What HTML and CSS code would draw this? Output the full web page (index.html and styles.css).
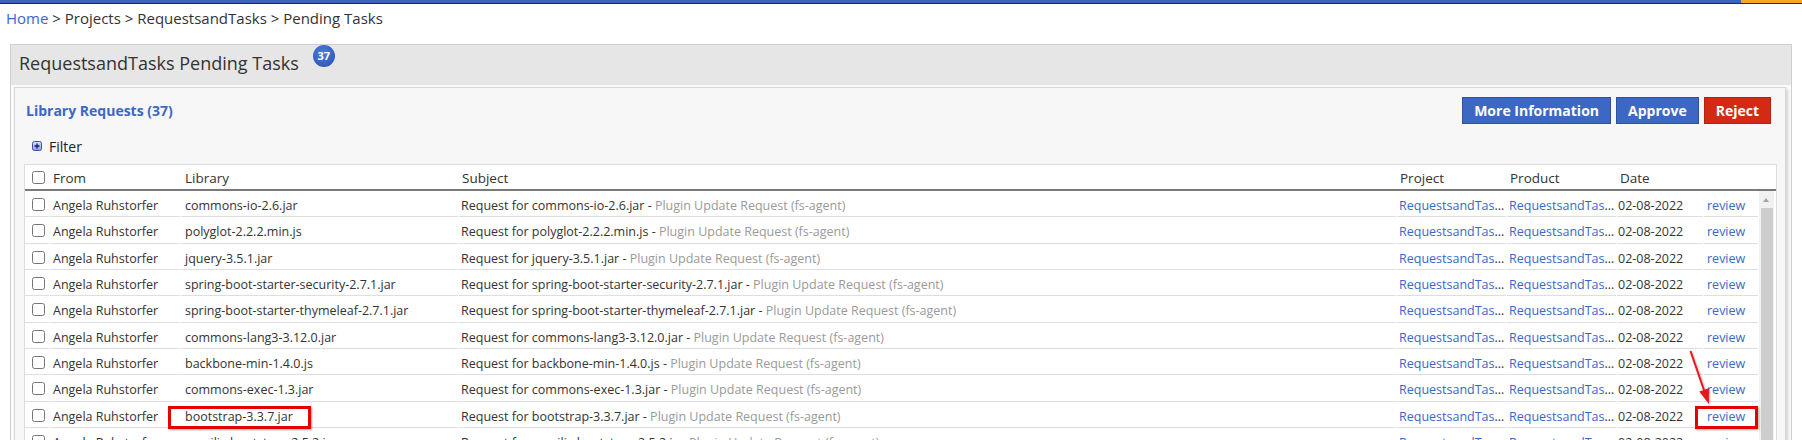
FILE: index.html
```html
<!DOCTYPE html>
<html>
<head>
<meta charset="utf-8">
<title>RequestsandTasks Pending Tasks</title>
<link rel="stylesheet" href="styles.css">
</head>
<body>
<div class="topbar"><div class="topbar-blue"></div><div class="topbar-orange"></div></div>
<nav class="crumbs"><a class="link">Home</a> &gt; Projects &gt; RequestsandTasks &gt; Pending Tasks</nav>
<section class="panel">
  <header class="panel-head">
    <h1 class="panel-title">RequestsandTasks Pending Tasks</h1>
    <span class="badge">37</span>
  </header>
  <div class="panel-body">
    <div class="card">
      <div class="toolbar">
        <span class="card-title">Library Requests (37)</span>
        <div class="btns">
          <button class="btn btn-blue">More Information</button>
          <button class="btn btn-blue">Approve</button>
          <button class="btn btn-red">Reject</button>
        </div>
      </div>
      <div class="filter">
        <svg class="filter-icon" width="10" height="10" viewBox="0 0 10 10"><defs><linearGradient id="fg" x1="0" y1="0" x2="0" y2="1"><stop offset="0" stop-color="#dfe2fa"/><stop offset="1" stop-color="#8f99e2"/></linearGradient></defs><rect x="0.5" y="0.5" width="9" height="9" rx="2" fill="url(#fg)" stroke="#3b4bb5"/><path d="M2.5 5h5M5 2.5v5" stroke="#0f1870" stroke-width="1.3"/></svg>
        <span>Filter</span>
      </div>
      <div class="grid">
        <div class="grid-head">
          <table class="tbl">
            <colgroup><col class="c-cb"><col class="c-from"><col class="c-lib"><col class="c-subj"><col class="c-proj"><col class="c-prod"><col class="c-date"><col class="c-rev"><col class="c-sb"></colgroup>
            <tr class="hrow"><th class="cb"><input type="checkbox"></th><th>From</th><th class="lib">Library</th><th>Subject</th><th>Project</th><th>Product</th><th>Date</th><th></th><th></th></tr>
          </table>
        </div>
        <div class="grid-body">
          <table class="tbl tbl-body">
            <colgroup><col class="c-cb"><col class="c-from"><col class="c-lib"><col class="c-subj"><col class="c-proj"><col class="c-prod"><col class="c-date"><col class="c-rev"></colgroup>
            <tr><td class="cb"><input type="checkbox"></td><td>Angela Ruhstorfer</td><td class="lib">commons-io-2.6.jar</td><td class="subj">Request for commons-io-2.6.jar - <span class="muted">Plugin Update Request (fs-agent)</span></td><td class="trunc"><a class="link">RequestsandTasks</a></td><td class="trunc"><a class="link">RequestsandTasks</a></td><td class="date">02-08-2022</td><td class="rev"><a class="link">review</a></td></tr>
            <tr><td class="cb"><input type="checkbox"></td><td>Angela Ruhstorfer</td><td class="lib">polyglot-2.2.2.min.js</td><td class="subj">Request for polyglot-2.2.2.min.js - <span class="muted">Plugin Update Request (fs-agent)</span></td><td class="trunc"><a class="link">RequestsandTasks</a></td><td class="trunc"><a class="link">RequestsandTasks</a></td><td class="date">02-08-2022</td><td class="rev"><a class="link">review</a></td></tr>
            <tr><td class="cb"><input type="checkbox"></td><td>Angela Ruhstorfer</td><td class="lib">jquery-3.5.1.jar</td><td class="subj">Request for jquery-3.5.1.jar - <span class="muted">Plugin Update Request (fs-agent)</span></td><td class="trunc"><a class="link">RequestsandTasks</a></td><td class="trunc"><a class="link">RequestsandTasks</a></td><td class="date">02-08-2022</td><td class="rev"><a class="link">review</a></td></tr>
            <tr><td class="cb"><input type="checkbox"></td><td>Angela Ruhstorfer</td><td class="lib">spring-boot-starter-security-2.7.1.jar</td><td class="subj">Request for spring-boot-starter-security-2.7.1.jar - <span class="muted">Plugin Update Request (fs-agent)</span></td><td class="trunc"><a class="link">RequestsandTasks</a></td><td class="trunc"><a class="link">RequestsandTasks</a></td><td class="date">02-08-2022</td><td class="rev"><a class="link">review</a></td></tr>
            <tr><td class="cb"><input type="checkbox"></td><td>Angela Ruhstorfer</td><td class="lib">spring-boot-starter-thymeleaf-2.7.1.jar</td><td class="subj">Request for spring-boot-starter-thymeleaf-2.7.1.jar - <span class="muted">Plugin Update Request (fs-agent)</span></td><td class="trunc"><a class="link">RequestsandTasks</a></td><td class="trunc"><a class="link">RequestsandTasks</a></td><td class="date">02-08-2022</td><td class="rev"><a class="link">review</a></td></tr>
            <tr><td class="cb"><input type="checkbox"></td><td>Angela Ruhstorfer</td><td class="lib">commons-lang3-3.12.0.jar</td><td class="subj">Request for commons-lang3-3.12.0.jar - <span class="muted">Plugin Update Request (fs-agent)</span></td><td class="trunc"><a class="link">RequestsandTasks</a></td><td class="trunc"><a class="link">RequestsandTasks</a></td><td class="date">02-08-2022</td><td class="rev"><a class="link">review</a></td></tr>
            <tr><td class="cb"><input type="checkbox"></td><td>Angela Ruhstorfer</td><td class="lib">backbone-min-1.4.0.js</td><td class="subj">Request for backbone-min-1.4.0.js - <span class="muted">Plugin Update Request (fs-agent)</span></td><td class="trunc"><a class="link">RequestsandTasks</a></td><td class="trunc"><a class="link">RequestsandTasks</a></td><td class="date">02-08-2022</td><td class="rev"><a class="link">review</a></td></tr>
            <tr><td class="cb"><input type="checkbox"></td><td>Angela Ruhstorfer</td><td class="lib">commons-exec-1.3.jar</td><td class="subj">Request for commons-exec-1.3.jar - <span class="muted">Plugin Update Request (fs-agent)</span></td><td class="trunc"><a class="link">RequestsandTasks</a></td><td class="trunc"><a class="link">RequestsandTasks</a></td><td class="date">02-08-2022</td><td class="rev"><a class="link">review</a></td></tr>
            <tr><td class="cb"><input type="checkbox"></td><td>Angela Ruhstorfer</td><td class="lib">bootstrap-3.3.7.jar</td><td class="subj">Request for bootstrap-3.3.7.jar - <span class="muted">Plugin Update Request (fs-agent)</span></td><td class="trunc"><a class="link">RequestsandTasks</a></td><td class="trunc"><a class="link">RequestsandTasks</a></td><td class="date">02-08-2022</td><td class="rev"><a class="link">review</a></td></tr>
            <tr><td class="cb"><input type="checkbox"></td><td>Angela Ruhstorfer</td><td class="lib">emailjs-bootstrap-2.5.2.js</td><td class="subj">Request for emailjs-bootstrap-2.5.2.js - <span class="muted">Plugin Update Request (fs-agent)</span></td><td class="trunc"><a class="link">RequestsandTasks</a></td><td class="trunc"><a class="link">RequestsandTasks</a></td><td class="date">02-08-2022</td><td class="rev"><a class="link">review</a></td></tr>
          </table>
          <div class="scrollbar"><div class="sb-up"></div><div class="sb-thumb"></div></div>
        </div>
      </div>
    </div>
  </div>
</section>
<div class="annot">
  <div class="mark mark-lib"></div>
  <div class="mark mark-rev"></div>
  <svg class="arrow" width="40" height="70" viewBox="0 0 40 70"><defs><filter id="ash" x="-50%" y="-50%" width="200%" height="200%"><feDropShadow dx="1" dy="1" stdDeviation="0.8" flood-color="#000" flood-opacity="0.3"/></filter></defs><g filter="url(#ash)"><line x1="9.5" y1="9" x2="23" y2="48" stroke="#e8161b" stroke-width="2"/><polygon points="28,62 27.7,46.2 18.3,49.5" fill="#e8161b"/></g></svg>
</div>
</body>
</html>
```
FILE: styles.css
```css
* { box-sizing: border-box; }
html, body { margin: 0; height: 440px; overflow: hidden; background: #fff; }
body { font-family: "Open Sans", "Noto Sans", sans-serif; color: #333; position: relative; }

.link { color: #3b67c7; text-decoration: none; cursor: pointer; }

.topbar { display: flex; height: 4px; border-bottom: 1px solid #1d2a4a; }
.topbar-blue { flex: 1; background: #3c62c0; }
.topbar-orange { width: 61px; background: #f6a823; }

.crumbs { height: 40px; padding: 4px 0 0 6px; font-size: 15px; line-height: 20px; color: #333; }

.panel { margin: 0 10px; border: 1px solid #cfcfcf; background: #fbfbfb; }
.panel-head { display: flex; align-items: flex-start; height: 40px; padding: 6px 0 0 8px; background: #e6e6e6; }
.panel-title { margin: 0; font-size: 18px; line-height: 24px; font-weight: 400; color: #333; }
.badge { position: relative; top: -6px; margin-left: 14px; width: 22px; height: 22px; border-radius: 50%;
  background: radial-gradient(circle at 45% 35%, #4f7ad9 0%, #3760c3 60%, #2a4ea8 100%);
  color: #fff; font-size: 11px; font-weight: 700; line-height: 22px; text-align: center; }

.panel-body { padding: 2px 5px 0 3px; }
.card { border: 1px solid #d8d8d8; background: #f7f7f7; box-shadow: 2px 2px 3px rgba(0,0,0,0.16); padding: 9px 8px 0 9px; height: 360px; }

.toolbar { display: flex; justify-content: space-between; align-items: center; height: 27px; padding: 0 6px 0 2px; }
.card-title { font-size: 14px; font-weight: 700; color: #3b67c7; }
.btns { display: flex; gap: 5px; }
.btn { height: 27px; padding: 0 11px; font-family: inherit; font-size: 14px; font-weight: 700; color: #fff; border: 1px solid; border-radius: 0; line-height: 23px; }
.btn-blue { background: #3d67c5; border-color: #2f529f; }
.btn-red { background: #d32a13; border-color: #b52310; }

.filter { display: flex; align-items: center; gap: 7px; height: 20px; margin-top: 12px; padding-left: 8px; font-size: 14px; color: #222; }
.filter-icon { display: block; }

.grid { margin-top: 8px; border: 1px solid #dcdcdc; background: #fff; }
.grid-head { border-bottom: 2px solid #7a7a7a; }
.grid-body { display: flex; height: 260px; overflow: hidden; }

.tbl { table-layout: fixed; border-collapse: separate; border-spacing: 1px 0; margin-left: -1px; }
.grid-head .tbl { width: 1752px; }
.tbl-body { width: 1735px; flex: none; align-self: flex-start; }
.c-cb { width: 24px; } .c-from { width: 130px; } .c-lib { width: 277px; } .c-subj { width: 937px; }
.c-proj { width: 109px; } .c-prod { width: 109px; } .c-date { width: 86px; } .c-rev { width: 54px; } .c-sb { width: 16px; }

.tbl th { height: 24px; padding: 2px 3px 0; font-size: 13.5px; font-weight: 400; text-align: left; color: #333; white-space: nowrap; }
.tbl td { height: 26.33px; padding: 4px 3px 0; font-size: 12.5px; color: #333; border-bottom: 1px solid #dedede; white-space: nowrap; overflow: hidden; }
.tbl .cb { padding: 0 0 0 7px; }
.tbl td.cb { padding-top: 2px; }
.tbl input[type="checkbox"] { display: block; margin: 0; width: 13px; height: 13px; }
.tbl .lib { padding-left: 4px; }
.tbl .subj { padding-left: 2px; }
.tbl .trunc { padding-left: 2px; padding-right: 0; text-overflow: ellipsis; }
.tbl .date { padding-left: 1px; }
.tbl .rev { padding-left: 3px; }
.muted { color: #9a9a9a; }

.scrollbar { width: 15px; margin-right: 2px; background: #f1f1f1; display: flex; flex-direction: column; }
.sb-up { height: 17px; position: relative; }
.sb-up::after { content: ""; position: absolute; left: 4px; top: 7px; border-left: 3.5px solid transparent; border-right: 3.5px solid transparent; border-bottom: 4px solid #a3a3a3; }
.sb-thumb { flex: 1; margin: 0 1px 0 2px; background: #cdcdcd; }

.annot { position: absolute; left: 0; top: 0; width: 100%; height: 100%; pointer-events: none; }
.mark { position: absolute; border: 3px solid #e60000; box-shadow: 1px 1px 2px rgba(0,0,0,0.35); }
.mark-lib { left: 168px; top: 406px; width: 143px; height: 23px; }
.mark-rev { left: 1695px; top: 406px; width: 63px; height: 23px; }
.arrow { position: absolute; left: 1681px; top: 342px; overflow: visible; }
```
